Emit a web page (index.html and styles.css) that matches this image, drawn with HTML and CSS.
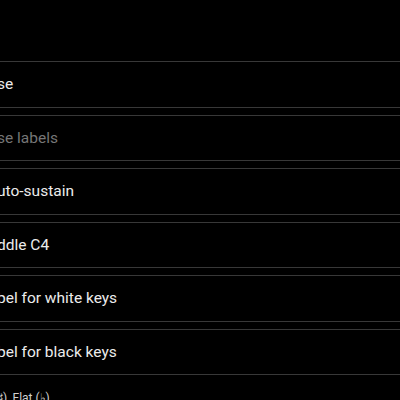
FILE: index.html
```html
<!DOCTYPE html>
<html lang="en">
<head>
  <meta charset="UTF-8">
  <title>Settings</title>
  <link rel="stylesheet" href="styles.css">
</head>
<body>
  <div class="header"></div>
  <div class="list">
    <div class="item"><span class="label">se</span></div>
    <div class="item disabled"><span class="label">se labels</span></div>
    <div class="item"><span class="label">uto-sustain</span></div>
    <div class="item"><span class="label">ddle C4</span></div>
    <div class="item"><span class="label">bel for white keys</span></div>
    <div class="item"><span class="label">bel for black keys</span></div>
    <div class="item plain"><span class="sub">♯), Flat (♭)</span></div>
  </div>
</body>
</html>
```

FILE: styles.css
```css
html, body {
  margin: 0;
  background: #000;
  overflow: hidden;
}

body {
  font-family: Roboto, 'Noto Sans', sans-serif;
  color: #ececec;
  width: 400px;
  height: 400px;
}

.header {
  height: 61px;
}

.item {
  display: flex;
  align-items: center;
  box-sizing: border-box;
  height: 46.5px;
  border-top: 1px solid #383838;
  border-bottom: 1px solid #383838;
  margin-bottom: 7px;
}

.label {
  font-size: 15.5px;
  margin-left: -3px;
  white-space: nowrap;
}

.disabled .label {
  color: #767676;
}

.plain {
  border: none;
  height: auto;
  padding-top: 9px;
}

.sub {
  font-size: 12px;
  color: #d0d0d0;
  margin-left: -3px;
}
```
